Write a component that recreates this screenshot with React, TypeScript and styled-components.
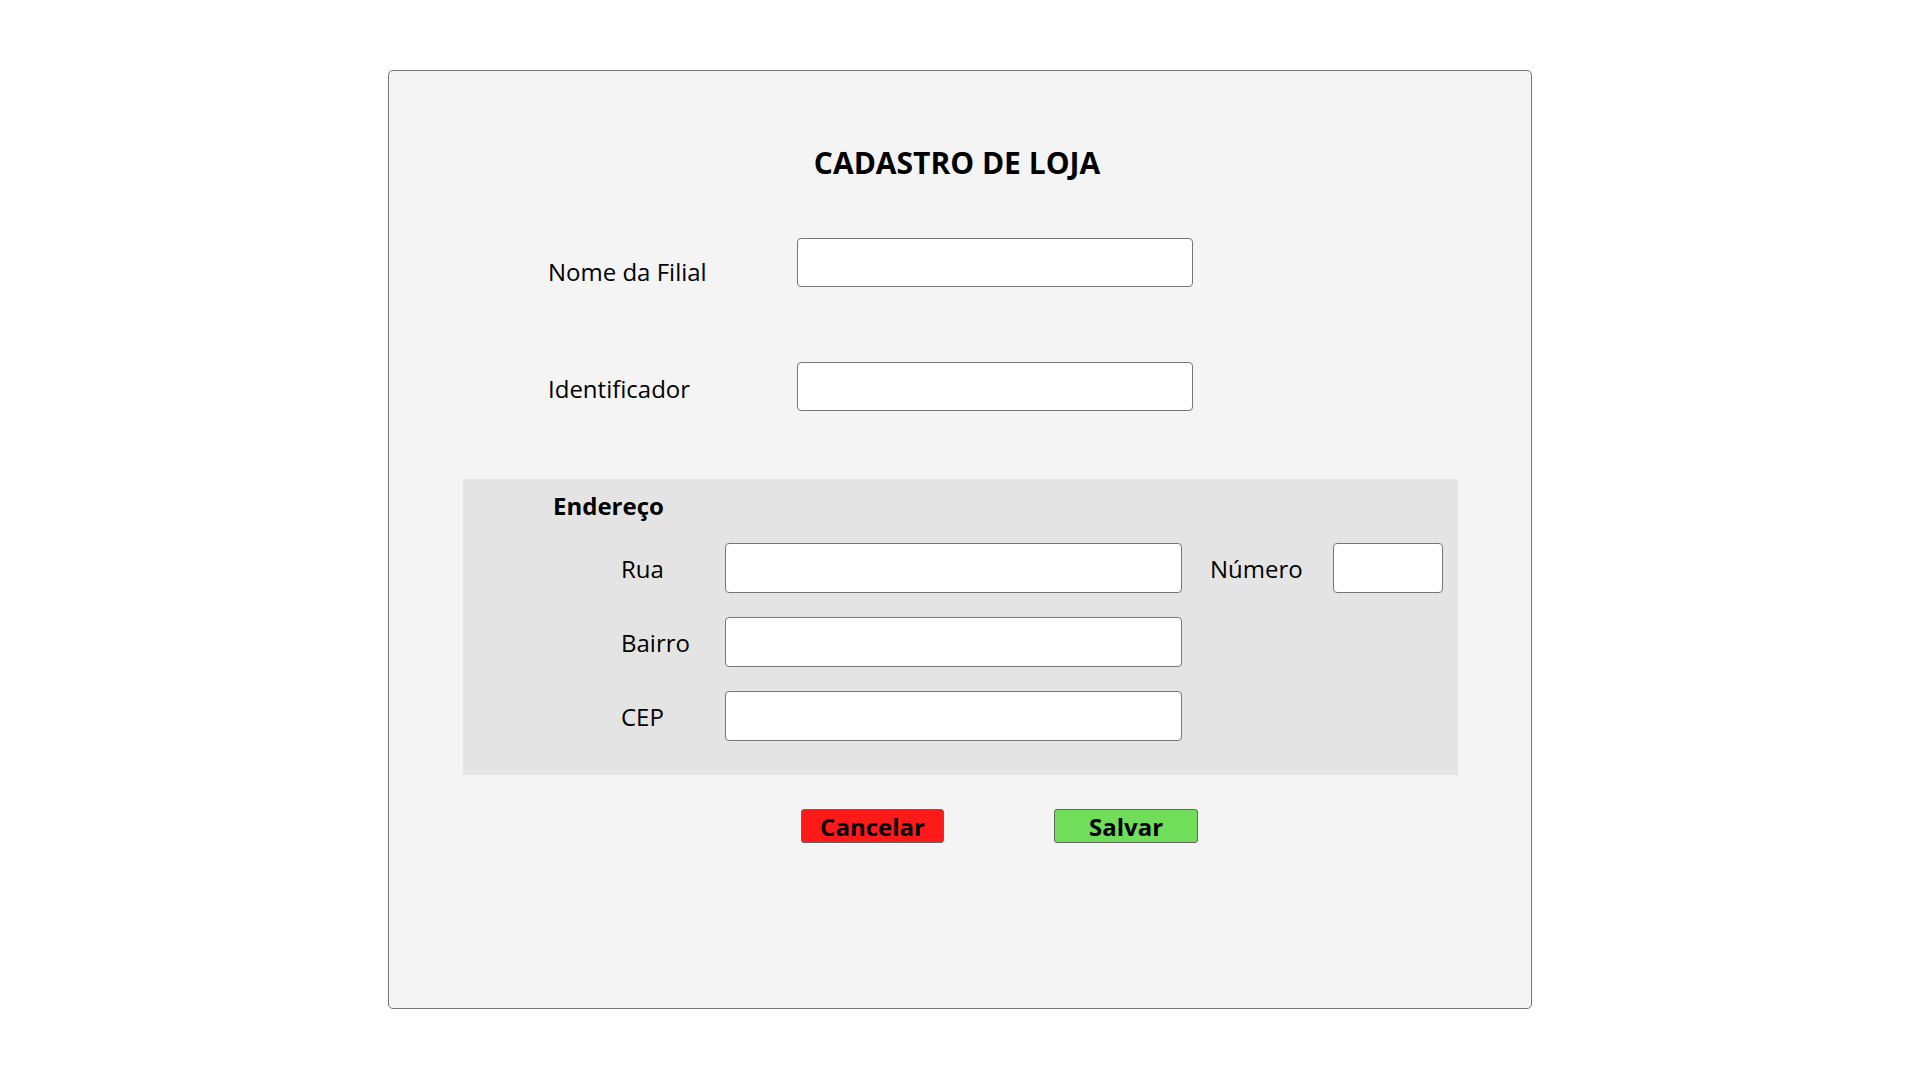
import React from "react";
import styled, { createGlobalStyle } from "styled-components";

const GlobalStyle = createGlobalStyle`
  html, body {
    margin: 0;
    padding: 0;
    background: #ffffff;
    font-family: "Open Sans", "Noto Sans", sans-serif;
    color: #000;
  }
  * { box-sizing: border-box; }
`;

const Card = styled.main`
  width: 1144px;
  height: 939px;
  margin: 70px auto 0;
  border: 1px solid #747474;
  border-radius: 5px;
  background: #f4f4f4;
  padding-top: 77px;
  display: flex;
  flex-direction: column;
`;

const Title = styled.h1`
  margin: 0;
  font-size: 30px;
  line-height: 1;
  font-weight: 700;
  text-align: center;
  padding-right: 6px;
`;

const TopFields = styled.section`
  display: flex;
  flex-direction: column;
  gap: 75px;
  margin-top: 60px;
  padding-left: 159px;
`;

const FieldRow = styled.div`
  display: flex;
  align-items: flex-start;
`;

const FieldLabel = styled.label<{ $offset: number }>`
  width: 249px;
  margin-top: ${(p) => p.$offset}px;
  font-size: 24px;
  line-height: 1;
`;

const TextInput = styled.input<{ $w: number; $h: number }>`
  width: ${(p) => p.$w}px;
  height: ${(p) => p.$h}px;
  border: 1px solid #767676;
  border-radius: 4px;
  background: #ffffff;
  padding: 0 8px;
  font-family: inherit;
  font-size: 18px;
  outline: none;
`;

const AddressPanel = styled.fieldset`
  margin: 68px 0 0 74px;
  width: 995px;
  border: none;
  background: #e4e4e4;
  padding: 14px 0 34px 90px;
  min-inline-size: auto;
`;

const PanelTitle = styled.h2`
  margin: 0 0 26px;
  padding-top: 1px;
  font-size: 24px;
  line-height: 1;
  font-weight: 700;
`;

const PanelRows = styled.div`
  display: flex;
  flex-direction: column;
  gap: 24px;
  margin-top: -1px;
  padding-left: 68px;
`;

const PanelRow = styled.div`
  display: flex;
  align-items: center;
`;

const RowLabel = styled.label<{ $w: number; $ml?: number }>`
  width: ${(p) => p.$w}px;
  margin-left: ${(p) => p.$ml ?? 0}px;
  padding-top: 2px;
  font-size: 24px;
  line-height: 1;
`;

const ButtonRow = styled.div`
  display: flex;
  gap: 110px;
  margin-top: 34px;
  padding-left: 412px;
`;

const ActionButton = styled.button<{ $bg: string; $w: number }>`
  width: ${(p) => p.$w}px;
  height: 34px;
  padding: 2px 0 0;
  border: 1px solid #666666;
  border-radius: 3px;
  background: ${(p) => p.$bg};
  color: #000;
  font-family: inherit;
  font-size: 24px;
  line-height: 1;
  font-weight: 700;
  cursor: pointer;
`;

export default function App() {
  return (
    <>
      <GlobalStyle />
      <Card>
        <Title>CADASTRO DE LOJA</Title>
        <TopFields>
          <FieldRow>
            <FieldLabel $offset={22}>Nome da Filial</FieldLabel>
            <TextInput $w={396} $h={49} />
          </FieldRow>
          <FieldRow>
            <FieldLabel $offset={15}>Identificador</FieldLabel>
            <TextInput $w={396} $h={49} />
          </FieldRow>
        </TopFields>
        <AddressPanel>
          <PanelTitle>Endereço</PanelTitle>
          <PanelRows>
            <PanelRow>
              <RowLabel $w={104}>Rua</RowLabel>
              <TextInput $w={457} $h={50} />
              <RowLabel $w={123} $ml={28}>Número</RowLabel>
              <TextInput $w={110} $h={50} />
            </PanelRow>
            <PanelRow>
              <RowLabel $w={104}>Bairro</RowLabel>
              <TextInput $w={457} $h={50} />
            </PanelRow>
            <PanelRow>
              <RowLabel $w={104}>CEP</RowLabel>
              <TextInput $w={457} $h={50} />
            </PanelRow>
          </PanelRows>
        </AddressPanel>
        <ButtonRow>
          <ActionButton $bg="#ff1a1a" $w={143}>Cancelar</ActionButton>
          <ActionButton $bg="#70dd5b" $w={144}>Salvar</ActionButton>
        </ButtonRow>
      </Card>
    </>
  );
}
